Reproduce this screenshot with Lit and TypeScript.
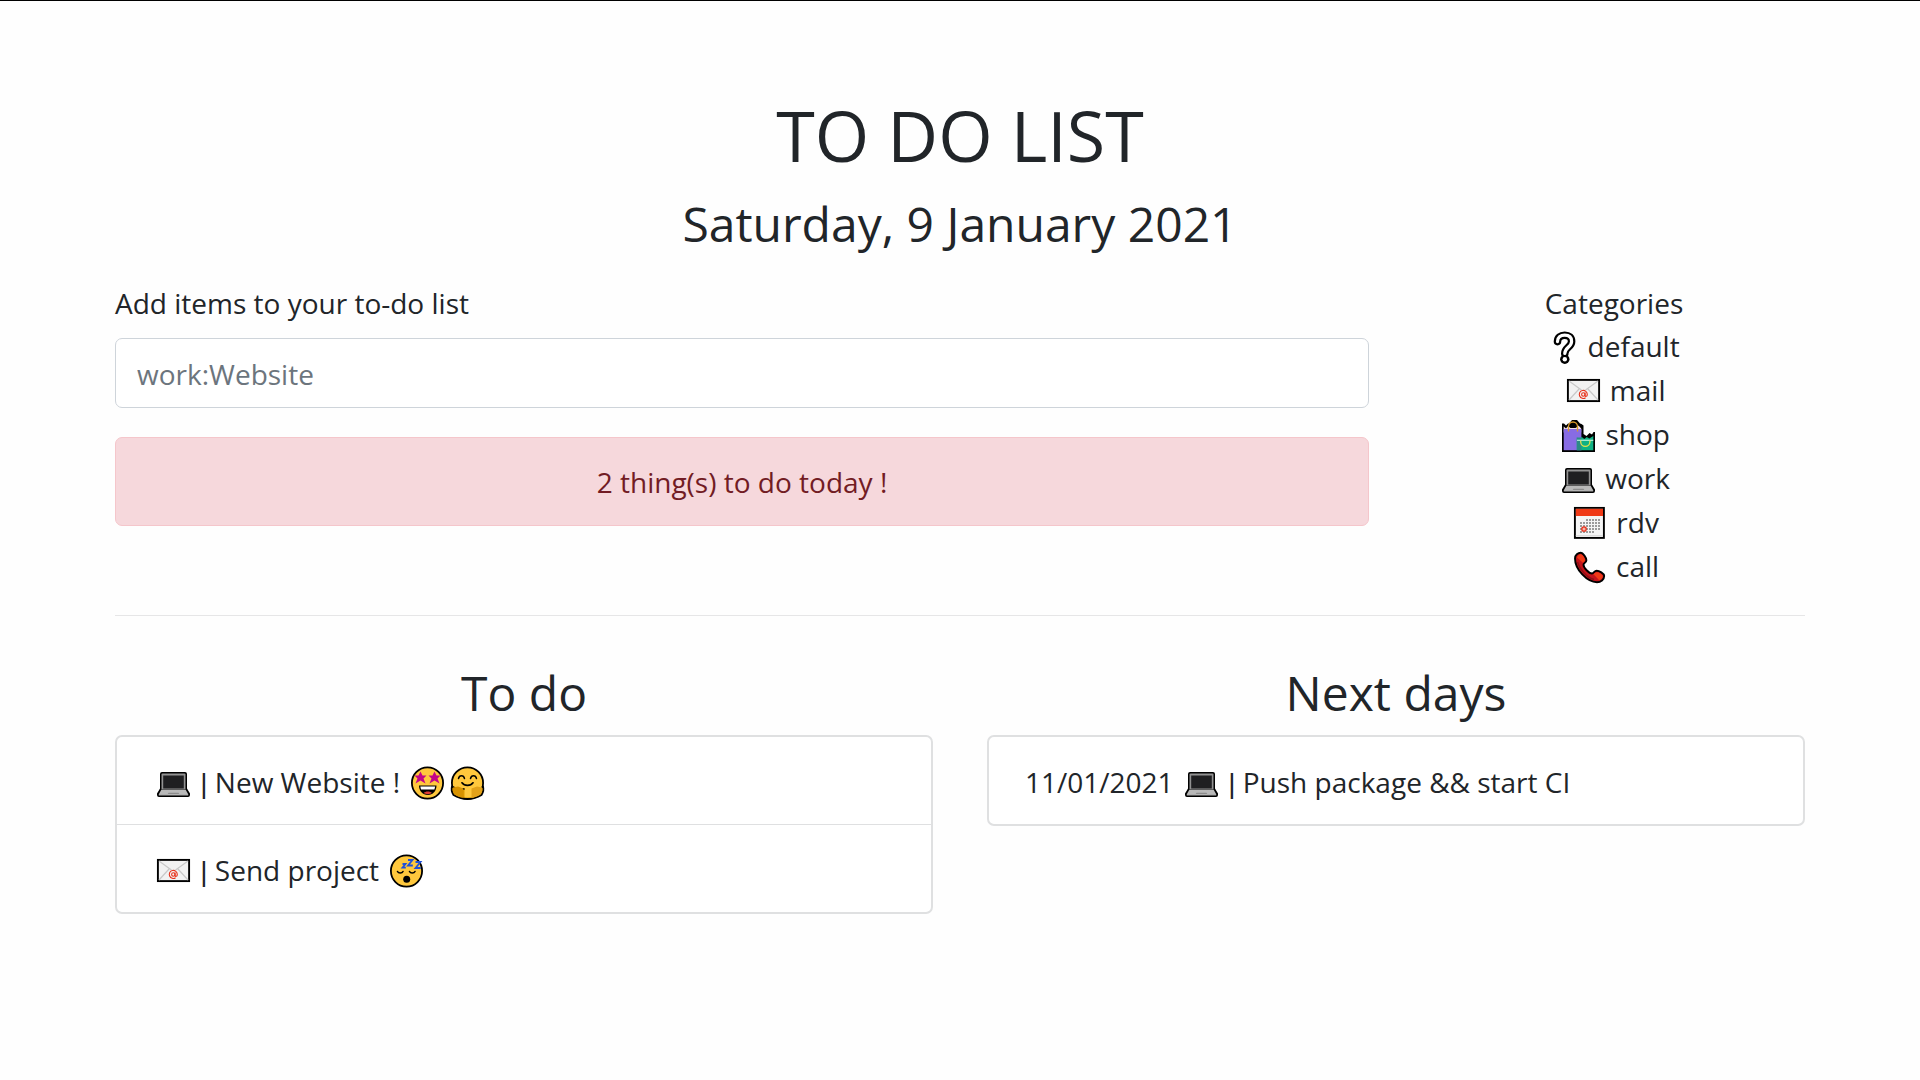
import { LitElement, html, css, svg } from "lit";
import { customElement, property, state } from "lit/decorators.js";

type IconName =
  | "default" | "mail" | "shop" | "work" | "rdv" | "call"
  | "starstruck" | "hug" | "sleep";

interface Task {
  id: string;
  date?: string;
  category: IconName;
  text: string;
  moods: IconName[];
}

const starPoints = (cx: number, cy: number) =>
  [[0, -6], [2, -2], [6, -2], [3, 1], [5, 6], [0, 3], [-5, 6], [-3, 1], [-6, -2], [-2, -2]]
    .map(([x, y]) => `${cx + x},${cy + y}`)
    .join(" ");

const calendarCells = [
  [17, 14], [20, 14], [23, 14], [26, 14], [29, 14],
  [11, 17], [14, 17], [17, 17], [20, 17], [23, 17], [26, 17], [29, 17],
  [11, 20], [14, 20], [17, 20], [20, 20], [23, 20], [26, 20], [29, 20],
  [11, 23], [14, 23], [17, 23], [20, 23], [23, 23], [26, 23], [29, 23],
  [11, 26], [14, 26], [17, 26], [20, 26], [23, 26],
];

const face = svg`<circle cx="20.5" cy="18" r="15.6" fill="#ffc83d" stroke="#000" stroke-width="1.8"/>`;

const drawings = {
  default: svg`
    <path d="M13.500 12.600C13.500 8.400 16.500 6.200 20.700 6.200c4.400 0 6.900 2.400 6.900 6.200 0 5.600-6.800 6.200-6.800 12" fill="none" stroke="#000" stroke-width="7.600" stroke-linecap="round"/>
    <circle cx="20.800" cy="30.300" r="4.700" fill="#000"/>
    <path d="M13.500 12.600C13.500 8.400 16.500 6.200 20.700 6.200c4.400 0 6.900 2.400 6.900 6.200 0 5.600-6.800 6.200-6.800 12" fill="none" stroke="#fff" stroke-width="3.200" stroke-linecap="round"/>
    <circle cx="20.800" cy="30.300" r="2.200" fill="#fff"/>`,
  mail: svg`
    <rect x="4.900" y="6.900" width="31.200" height="21.200" fill="#f2f2f2" stroke="#000" stroke-width="1.900"/>
    <path d="M6 8l14.500 10.500L35 8M6 27l10.500-11.500M35 27L24.500 15.500" fill="none" stroke="#c8c8c8" stroke-width="1.200"/>
    <circle cx="20.500" cy="21.500" r="5" fill="#f2f2f2"/>
    <circle cx="20.300" cy="21.500" r="1.700" fill="none" stroke="#e8321c" stroke-width="1.100"/>
    <path d="M22.100 19.600v2.800c0 1.500 2.200 1.300 2.200-1a4 4 0 1 0-1.700 3.300" fill="none" stroke="#e8321c" stroke-width="1.100"/>`,
  shop: svg`
    <path d="M4 35V6.500h2l2 2 2-2h1L14 3h5l3 3.500 1.500.5 2 1.500V17l3 2 3-3 2.500 1.500L35.500 15H37v20z" fill="#000"/>
    <path d="M5.700 9.500l2.300 2 2.500-3 2.500 2 2.500-2 2.500 2 2.500-2 2.700 3v4H5.700z" fill="#f2dfe6"/>
    <path d="M10.500 9.500c0-6 9-6 9 0l-2 1.500h-5z" fill="#000"/>
    <path d="M5.700 12h17.700v21.200H5.700z" fill="#886ce4"/>
    <path d="M18.800 20.500l2.500 1.500 2.500-2 2.500 2 2.500-2 2.500 1.500 4-2.500v14.200H18.800z" fill="#0fb184"/>
    <path d="M18.800 20.500h4.600v12.700h-4.600z" fill="#2b8c86"/>
    <path d="M19 23.300h16.300" stroke="#b7efdc" stroke-width="1.200"/>
    <path d="M10.500 14.500V9.500a4.500 4.500 0 0 1 9 0v5" fill="none" stroke="#d99a2b" stroke-width="1.300"/>
    <path d="M22.700 23.500v1.300a4.600 4.600 0 0 0 9.200 0v-1.300" fill="none" stroke="#e6e04a" stroke-width="1.300"/>`,
  work: svg`
    <path d="M9 7h23q2 0 2 2v14.500l3 5V30q0 2-2 2H6q-2 0-2-2v-1.500l3-5V9q0-2 2-2z" fill="#000"/>
    <path d="M9.500 8.500h22q1 0 1 1V24h-24V9.500q0-1 1-1z" fill="#929292"/>
    <path d="M10.200 10.500h20.600v13H10.200z" fill="#1f1f21"/>
    <path d="M8.500 24.500h24l2.700 4.700H5.800z" fill="#b9b9b9"/>
    <path d="M15.500 27.700h10l1 1.500h-12z" fill="#8c8c8c"/>
    <path d="M5.800 29.200h29.400v1.200H5.800z" fill="#d2d2d2"/>`,
  rdv: svg`
    <rect x="5.900" y="2.900" width="29" height="30" fill="#f5f5f5" stroke="#000" stroke-width="1.900"/>
    <path d="M6.800 3.800h27.200V11H6.800z" fill="#f03a17"/>
    <path d="M6.800 30.500h27.200" stroke="#dcdcdc" stroke-width="1"/>
    ${calendarCells.map(([x, y]) => svg`<rect x=${x} y=${y} width="2" height="2" fill="#9b9b9b"/>`)}
    <circle cx="15" cy="24" r="2.200" fill="#f5b5a8" stroke="#e8321c" stroke-width="1.300"/>`,
  call: svg`
    <path d="M6 9.500C6 6 9 3.700 11.800 3.700c2.200 0 5.600 5.300 5.600 7.500 0 2.500-2.900 2.500-2.900 4.500 0 3 5.500 8.800 8.500 8.800 2 0 2.200-2.800 4.700-2.800 2.300 0 7.500 2.600 7.500 5.300 0 3.500-3.400 6.200-7.200 6.200C18 33.200 6 20.500 6 9.500z" fill="#c4141b" stroke="#000" stroke-width="1.900" stroke-linejoin="round"/>
    <path d="M8 8.500c.5-2 2-3.300 3.800-3.300 1.500 0 4.300 4 4.300 6 0 1.200-1.300 1.600-2.200 2.600z" fill="#f03a17"/>
    <path d="M24.500 25.200c1-1 1.600-2 3.200-2 1.800 0 6 2.200 6 4 0 1.700-1.500 3.300-3.500 4.100z" fill="#f03a17"/>
    <path d="M8.500 13c2 7.500 9 15.500 16.500 17.500" fill="none" stroke="#8e0f16" stroke-width="1.500"/>`,
  starstruck: svg`
    ${face}
    <polygon points=${starPoints(13.5, 12.5)} fill="#c30588"/>
    <polygon points=${starPoints(27.5, 12.5)} fill="#c30588"/>
    <path d="M12 20.500h17.500c0 5.500-3.700 9.500-8.700 9.500S12 26 12 20.500z" fill="#000"/>
    <path d="M13.300 21.500h14.900l-.8 3H14z" fill="#fff"/>
    <path d="M16.800 28c1.500-2 6.500-2 8 0-2 1.500-6 1.500-8 0z" fill="#e23c35"/>`,
  hug: svg`
    ${face}
    <path d="M5 21.500l5 2.500h21l5-2.500c1 3 .3 5.500-1.500 8.500-4 2.500-7 4-14 4s-10-1.500-14-4C4.700 27 4 24.500 5 21.500z" fill="#e19d00" stroke="#000" stroke-width="1.800" stroke-linejoin="round"/>
    <path d="M6.500 18h28v5l-3 2v5h-3l-2 2.500h-9V23H9z" fill="#ffc83d"/>
    <path d="M6 22.500l5-1 5.500 2v9.200c-4-.4-7-1.600-9-3.200C5.500 27 5.300 25 6 22.500z" fill="#d79200"/>
    <path d="M35 22.500l-5-1-5.500 2v9.200c4-.4 7-1.600 9-3.200 2-2.500 2.200-4.500 1.500-7z" fill="#e3a21a"/>
    <path d="M11.500 13.500c.8-3.700 5.200-3.700 6 0M23.500 13.500c.8-3.700 5.200-3.700 6 0" fill="none" stroke="#000" stroke-width="1.500" stroke-linecap="round"/>
    <path d="M15 17.800c2.500 3.500 8.500 3.500 11 0" fill="none" stroke="#000" stroke-width="1.700" stroke-linecap="round"/>`,
  sleep: svg`
    ${face}
    <path d="M11.500 18.500c1 2 4.500 2 5.500 0M23.500 18.500c1 2 4.500 2 5.500 0" fill="none" stroke="#000" stroke-width="1.600" stroke-linecap="round"/>
    <circle cx="20.700" cy="26.300" r="3.500" fill="#000"/>
    <path d="M16.500 11h3l-3 3.700h3.300M22 7h4.500l-4.500 5.500h4.800M29.500 9h5l-5 6h5.300" fill="none" stroke="#1f4fd8" stroke-width="1.800"/>`,
};

@customElement("emoji-icon")
class EmojiIcon extends LitElement {
  @property({ reflect: true }) name: IconName = "default";

  static styles = css`
    :host { display: inline-block; width: 40px; height: 36px; vertical-align: -8px; }
    :host([name="default"]) { width: 32px; }
    .glyph { display: block; width: 100%; height: 100%; }
  `;

  render() {
    const box = this.name === "default" ? "4 0 32 36" : "0 0 40 36";
    return html`<svg class="glyph" viewBox=${box} role="img" aria-label=${this.name}>${drawings[this.name]}</svg>`;
  }
}

@customElement("app-root")
class AppRoot extends LitElement {
  @state() private categories: IconName[] = ["default", "mail", "shop", "work", "rdv", "call"];
  @state() private today: Task[] = [
    { id: "website", category: "work", text: "New Website !", moods: ["starstruck", "hug"] },
    { id: "project", category: "mail", text: "Send project", moods: ["sleep"] },
  ];
  @state() private nextDays: Task[] = [
    { id: "package", date: "11/01/2021", category: "work", text: "Push package && start CI", moods: [] },
  ];

  static styles = css`
    :host {
      display: block;
      box-sizing: border-box;
      min-height: 100vh;
      padding: 90px 88px 48px;
      border-top: 1px solid #000;
      background: #fefefe;
      color: #212529;
      font-family: "Open Sans", "Noto Sans", sans-serif;
      font-size: 28px;
      line-height: 44px;
    }
    *, *::before, *::after { box-sizing: border-box; }
    h1, h2, ul { margin: 0; padding: 0; font-weight: 400; }
    ul { list-style: none; }
    .title { margin-bottom: 14px; font-size: 70px; line-height: 88px; text-align: center; }
    .subtitle { font-size: 48px; line-height: 61px; text-align: center; }
    .date { margin-bottom: 27px; }
    .entry { display: grid; grid-template-columns: 9fr 3fr; }
    .column { min-width: 0; padding: 0 27px; }
    .label { display: block; margin-bottom: 13px; }
    .field {
      display: block;
      width: 100%;
      height: 70px;
      padding: 1px 21px 0;
      border: 1px solid #ced4da;
      border-radius: 7px;
      background: #fff;
      color: #495057;
      font: inherit;
    }
    .field::placeholder { color: #6c757d; opacity: 1; }
    .alert {
      margin-top: 29px;
      padding: 22px 36px 21px;
      border: 1px solid #f5c6cb;
      border-radius: 7px;
      background: #f6d8dc;
      color: #721c24;
      text-align: center;
    }
    .categories { text-align: center; }
    .heading { height: 43px; }
    .rule { height: 1px; margin: 27px 27px 46px; border: 0; background: #e6e6e7; }
    .lists { display: grid; grid-template-columns: 1fr 1fr; }
    .tasks { margin-top: 12px; border: 2px solid #dfe0e1; border-radius: 7px; background: #fff; }
    .task { padding: 23px 36px 18px; }
    .task + .task { border-top: 1px solid #dfe0e1; }
    .bar { font-family: "Liberation Sans", sans-serif; }
  `;

  private renderTask(task: Task) {
    return html`<li class="task">${task.date ? html`${task.date} ` : ""}<emoji-icon name=${task.category}></emoji-icon> <span class="bar">|</span> ${task.text} ${task.moods.map((mood) => html`<emoji-icon name=${mood}></emoji-icon>`)}</li>`;
  }

  private renderList(title: string, tasks: Task[]) {
    return html`
      <section class="column">
        <h2 class="subtitle">${title}</h2>
        <ul class="tasks">${tasks.map((task) => this.renderTask(task))}</ul>
      </section>
    `;
  }

  private addTask(event: Event) {
    event.preventDefault();
    const field = this.renderRoot.querySelector<HTMLInputElement>("#item")!;
    const value = field.value.trim();
    if (!value) return;
    const [prefix, ...rest] = value.split(":");
    const known = rest.length > 0 && this.categories.includes(prefix as IconName);
    this.today = [...this.today, {
      id: String(Date.now()),
      category: known ? (prefix as IconName) : "default",
      text: known ? rest.join(":") : value,
      moods: [],
    }];
    field.value = "";
  }

  render() {
    return html`
      <header>
        <h1 class="title">TO DO LIST</h1>
        <h2 class="subtitle date">Saturday, 9 January 2021</h2>
      </header>
      <main>
        <div class="entry">
          <div class="column">
            <form @submit=${this.addTask}>
              <label class="label" for="item">Add items to your to-do list</label>
              <input class="field" id="item" type="text" placeholder="work:Website" autocomplete="off">
            </form>
            <div class="alert" role="status">${this.today.length} thing(s) to do today !</div>
          </div>
          <aside class="column categories">
            <div class="heading">Categories</div>
            <ul>
              ${this.categories.map((name) => html`<li><emoji-icon name=${name}></emoji-icon> ${name}</li>`)}
            </ul>
          </aside>
        </div>
        <hr class="rule">
        <div class="lists">
          ${this.renderList("To do", this.today)}
          ${this.renderList("Next days", this.nextDays)}
        </div>
      </main>
    `;
  }
}
